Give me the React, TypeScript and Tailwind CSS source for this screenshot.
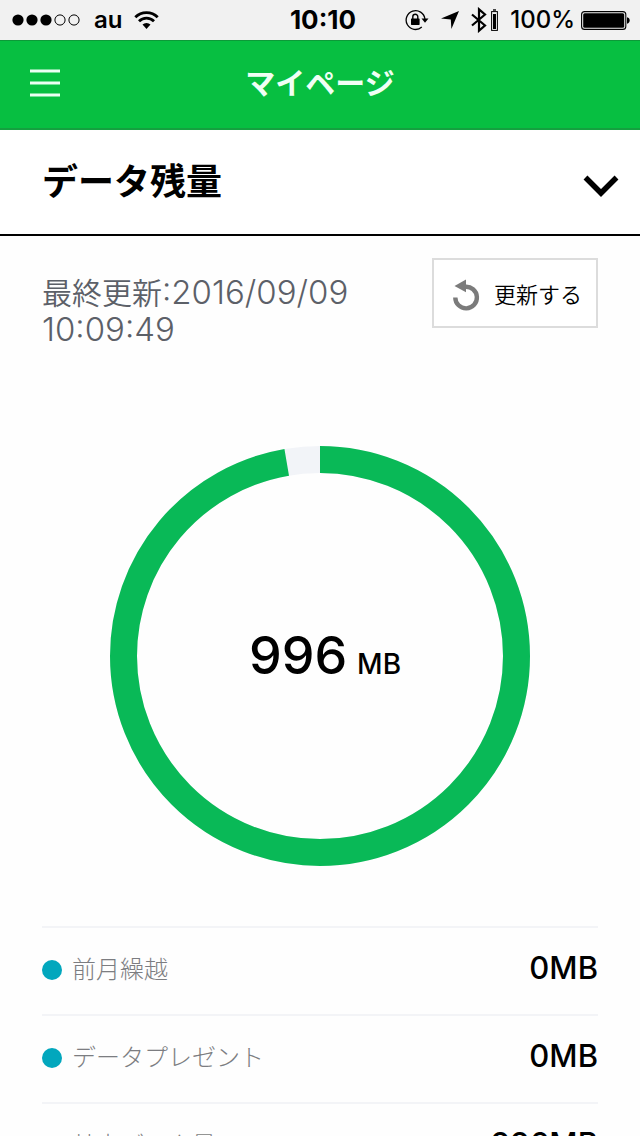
import type { ReactNode } from "react";

type Usage = { label: string; value: string };

const usages: Usage[] = [
  { label: "前月繰越", value: "0MB" },
  { label: "データプレゼント", value: "0MB" },
  { label: "基本データ量", value: "996MB" },
];

function SignalDots() {
  return (
    <svg width="68" height="12" viewBox="0 0 68 12" aria-hidden="true">
      <circle cx="6" cy="6" r="5.6" />
      <circle cx="20" cy="6" r="5.6" />
      <circle cx="34" cy="6" r="5.6" />
      <circle cx="48" cy="6" r="5.1" fill="none" stroke="#000" />
      <circle cx="62" cy="6" r="5.1" fill="none" stroke="#000" />
    </svg>
  );
}

function Wifi() {
  return (
    <svg width="25" height="20" viewBox="0 0 25 20" fill="none" stroke="#000" strokeWidth="2.8" aria-hidden="true">
      <path d="M1.3 7.2a15.8 15.8 0 0 1 22.4 0" />
      <path d="M5 11.2a10.6 10.6 0 0 1 15 0" />
      <path d="M12.5 19l-4-4.4a5.6 5.6 0 0 1 8 0z" fill="#000" stroke="none" />
    </svg>
  );
}

function RotationLock() {
  return (
    <svg width="24" height="22" viewBox="0 0 24 22" aria-hidden="true">
      <path d="M16.8 18.1A9.4 9.4 0 1 1 19.9 10" fill="none" stroke="#000" strokeWidth="1.3" />
      <path d="M16.5 9.6h7L20 13.8z" />
      <rect x="6" y="9.5" width="8.6" height="6.4" rx="0.6" />
      <path d="M7.8 10V7.8a2.5 2.5 0 0 1 5 0V10" fill="none" stroke="#000" strokeWidth="1.4" />
    </svg>
  );
}

function Bluetooth() {
  return (
    <svg width="16" height="26" viewBox="0 0 16 26" fill="none" stroke="#000" strokeWidth="2.2" aria-hidden="true">
      <path d="M1 7.5l13 11-6 5.2V2.3l6 5.2L1 18.5" />
    </svg>
  );
}

function StatusBar() {
  return (
    <div className="grid h-10 shrink-0 grid-cols-[1fr_auto_1fr] items-center bg-[#f1f1f1] pr-2.5 pl-3 text-2xl font-semibold">
      <div className="flex items-center">
        <SignalDots />
        <span className="mr-3 ml-3.5">au</span>
        <Wifi />
      </div>
      <span className="pl-1 text-[26px] font-bold">10:10</span>
      <div className="flex items-center justify-end">
        <RotationLock />
        <svg className="ml-3" width="18" height="18" viewBox="0 0 18 18" aria-hidden="true">
          <path d="M18 0L10.4 18l-.6-9.6L0 7.6z" />
        </svg>
        <div className="ml-3 flex items-center gap-1">
          <Bluetooth />
          <svg width="7" height="22" viewBox="0 0 7 22" aria-hidden="true">
            <path d="M2 1h3" stroke="#000" strokeWidth="1.4" />
            <rect x="0.6" y="2.6" width="5.8" height="18.8" fill="none" stroke="#000" strokeWidth="1" />
            <rect x="2" y="5" width="3" height="15" />
          </svg>
        </div>
        <span className="mr-1.5 ml-3 font-medium">100%</span>
        <svg width="49" height="19" viewBox="0 0 49 19" aria-hidden="true">
          <rect x="0.6" y="0.6" width="44.2" height="17.8" rx="3" fill="none" stroke="#000" strokeWidth="1.1" />
          <rect x="2.2" y="2.2" width="41" height="14.6" rx="1.5" />
          <path d="M46 6.3c3.6.4 3.6 6 0 6.4z" />
        </svg>
      </div>
    </div>
  );
}

function Header() {
  return (
    <header className="grid h-[90px] shrink-0 grid-cols-[1fr_auto_1fr] items-center border-t border-b-2 border-t-[#0c9a38] border-b-[#14a03f] bg-[#07bf41] px-[30px] pb-1">
      <button type="button" aria-label="メニュー" className="w-fit">
        <svg width="30" height="28" viewBox="0 0 30 28" stroke="#ecfff3" strokeWidth="3">
          <path d="M0 2h30M0 14h30M0 26h30" />
        </svg>
      </button>
      <h1 className="text-3xl leading-9 font-bold text-[#f0fff5]">マイページ</h1>
    </header>
  );
}

function SectionTitle({ children }: { children: ReactNode }) {
  return (
    <h2 className="shrink-0 border-b-2 border-black bg-white">
      <button type="button" aria-expanded="true" className="flex h-[104px] w-full items-center justify-between pr-[21px] pl-[42px] text-4xl font-bold">
        <span>{children}</span>
        <svg className="mt-2" width="36" height="22" viewBox="0 0 36 22" fill="none" stroke="#000" strokeWidth="5.5">
          <path d="M2.5 2.5L18 18L33.5 2.5" />
        </svg>
      </button>
    </h2>
  );
}

function RefreshButton() {
  return (
    <button type="button" className="flex h-[70px] w-[166px] shrink-0 items-center gap-3.5 border-2 border-[#dcdcdc] bg-white pt-1 pl-[19px] text-[22px] text-black">
      <svg width="27" height="32" viewBox="0 0 27 32" aria-hidden="true">
        <path d="M12 7.8a10.8 10.8 0 1 1-9.7 10.7" fill="none" stroke="#7b7b7b" strokeWidth="4.4" />
        <path d="M1.5 7L13 .5v12.8z" fill="#7b7b7b" />
      </svg>
      <span className="font-[350]">更新する</span>
    </button>
  );
}

function Ring({ ratio }: { ratio: number }) {
  const r = 196.5;
  const length = 2 * Math.PI * r;
  return (
    <svg className="col-start-1 row-start-1" width="420" height="420" viewBox="0 0 420 420" fill="none" strokeWidth="27" aria-hidden="true">
      <circle cx="210" cy="210" r={r} stroke="#f2f4f8" />
      <circle cx="210" cy="210" r={r} stroke="#09b957" strokeDasharray={`${length * ratio} ${length}`} transform="rotate(-90 210 210)" />
    </svg>
  );
}

export default function App() {
  return (
    <div className="flex h-screen flex-col overflow-hidden bg-[#fefefe] font-[Inter,'Noto_Sans_CJK_JP',sans-serif] text-black">
      <StatusBar />
      <Header />
      <SectionTitle>データ残量</SectionTitle>

      <main className="px-[42px] pt-[22px]">
        <div className="flex h-[88px] items-start justify-between">
          <div className="pt-4 text-[33px] leading-9 font-[350] text-[#5c6068]">
            <p className="flex items-baseline">
              <span className="text-3xl leading-9">最終更新</span>
              <span>:2016/09/09</span>
            </p>
            <p>10:09:49</p>
          </div>
          <RefreshButton />
        </div>

        <div className="mt-[100px] grid place-items-center">
          <Ring ratio={0.9725} />
          <p className="col-start-1 row-start-1 pl-2.5 text-[52px] leading-none font-medium">
            996 <span className="-ml-1 text-[28px]">MB</span>
          </p>
        </div>

        <dl className="mt-[60px]">
          {usages.map((usage) => (
            <div key={usage.label} className="flex h-22 items-center justify-between border-t-2 border-[#f3f4f7] pb-0.5">
              <dt className="flex items-center gap-2.5 text-2xl font-light text-[#7c7d81]">
                <span className="size-5 rounded-full bg-[#02a7bd]" />
                {usage.label}
              </dt>
              <dd className="pb-1 text-[31px] font-medium">{usage.value}</dd>
            </div>
          ))}
        </dl>
      </main>
    </div>
  );
}
